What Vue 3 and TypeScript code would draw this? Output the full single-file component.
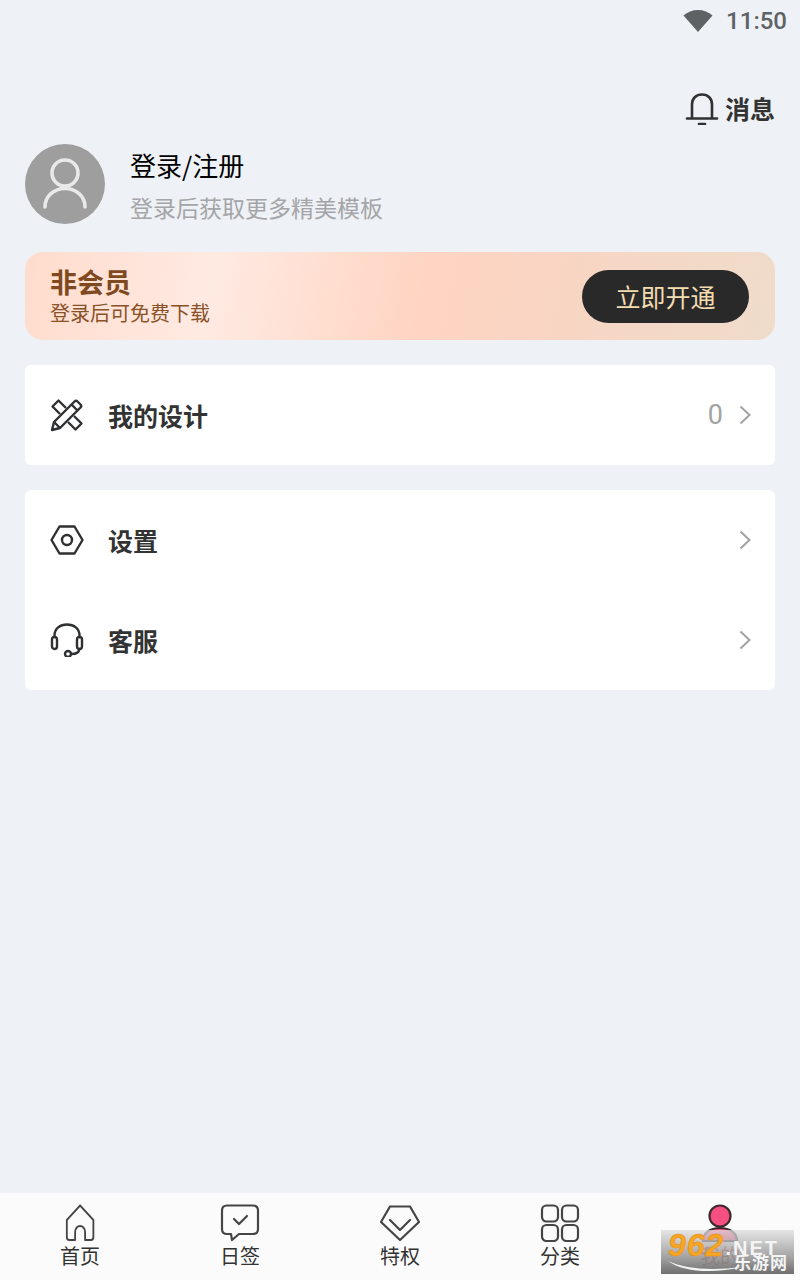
<script setup lang="ts">
const tabs = [
  { label: '首页', icon: 'home' },
  { label: '日签', icon: 'sign' },
  { label: '特权', icon: 'gem' },
  { label: '分类', icon: 'grid' },
  { label: '我的', icon: 'me' },
]
</script>

<template>
  <div class="page">
    <div class="status">
      <svg class="wifi" width="30" height="24" viewBox="0 0 30 24">
        <path d="M0.5 6.5C4.500 3 9.500 1 15 1s10.500 2 14.500 5.500L15 23z" fill="#5f6265" />
      </svg>
      <span class="time">11:50</span>
    </div>

    <div class="msg-row">
      <svg width="34" height="34" viewBox="0 0 34 34" fill="none" stroke="#2f3133" stroke-width="2.600">
        <path d="M7 27V13.500C7 7.500 11 3.500 17 3.500s10 4 10 10V27" />
        <path d="M2 27.500H32" stroke-linecap="round" />
        <path d="M14 33H20" stroke-linecap="round" />
      </svg>
      <span class="msg-text">消息</span>
    </div>

    <div class="user">
      <div class="avatar">
        <svg width="48" height="52" viewBox="0 0 48 52" fill="none" stroke="#e9e9e9" stroke-width="3.600" stroke-linecap="round">
          <circle cx="24" cy="15" r="13" />
          <path d="M4 49C4 38 13 30.500 24 30.500S44 38 44 49" />
        </svg>
      </div>
      <div class="user-text">
        <div class="user-title">登录/注册</div>
        <div class="user-sub">登录后获取更多精美模板</div>
      </div>
    </div>

    <div class="vip">
      <div class="vip-text">
        <div class="vip-title">非会员</div>
        <div class="vip-sub">登录后可免费下载</div>
      </div>
      <div class="vip-btn">立即开通</div>
    </div>

    <div class="card">
      <div class="row">
        <svg class="row-icon" width="34" height="34" viewBox="0 0 34 34" fill="none" stroke="#2e3032" stroke-width="2.400" stroke-linejoin="round">
          <path d="M10 16L2.500 8.500 8.500 2.500 16 10" />
          <path d="M18 24L25.500 31.500 31.500 25.500 24 18" />
          <path d="M2 32L4 24 24.500 3.500Q26 2 27.500 3.500L30.500 6.500Q32 8 30.500 9.500L10 30z" />
          <path d="M21.500 6.500L27.500 12.500" />
          <path d="M4 24L10 30" />
        </svg>
        <span class="row-label">我的设计</span>
        <span class="row-count">0</span>
        <svg class="chev" width="12" height="20" viewBox="0 0 12 20" fill="none" stroke="#a3a3a3" stroke-width="2">
          <path d="M1.500 1.500L10.500 10 1.500 18.500" />
        </svg>
      </div>
    </div>

    <div class="card">
      <div class="row">
        <svg class="row-icon" width="34" height="30" viewBox="0 0 34 30" fill="none" stroke="#2e3032" stroke-width="2.400" stroke-linejoin="round">
          <path d="M9.500 1.500H24.500L32.500 15 24.500 28.500H9.500L1.500 15z" />
          <circle cx="17" cy="15" r="5" />
        </svg>
        <span class="row-label">设置</span>
        <svg class="chev" width="12" height="20" viewBox="0 0 12 20" fill="none" stroke="#a3a3a3" stroke-width="2">
          <path d="M1.500 1.500L10.500 10 1.500 18.500" />
        </svg>
      </div>
      <div class="row">
        <svg class="row-icon" width="34" height="34" viewBox="0 0 34 34" fill="none" stroke="#2e3032" stroke-width="2.400" stroke-linecap="round">
          <path d="M4.500 14V12.500C4.500 5.500 10 1.500 17 1.500S29.500 5.500 29.500 12.500V14" />
          <rect x="2" y="14" width="5" height="12" rx="2.500" />
          <rect x="27" y="14" width="5" height="12" rx="2.500" />
          <path d="M29.500 26C29 29.500 26.500 31 21.500 31" />
          <circle cx="18" cy="31" r="3" />
        </svg>
        <span class="row-label">客服</span>
        <svg class="chev" width="12" height="20" viewBox="0 0 12 20" fill="none" stroke="#a3a3a3" stroke-width="2">
          <path d="M1.500 1.500L10.500 10 1.500 18.500" />
        </svg>
      </div>
    </div>

    <div class="tabbar">
      <div v-for="tab in tabs" :key="tab.label" class="tab" :class="{ 'tab--on': tab.icon === 'me' }">
        <svg width="40" height="38" viewBox="0 0 40 38" fill="none" stroke="#454545" stroke-width="2.200" stroke-linejoin="round" stroke-linecap="round">
          <template v-if="tab.icon === 'home'">
            <path d="M4 16L20 1.500 36 16 M4 16V33Q4 36 7 36H14V28A6 6 0 0 1 26 28V36H33Q36 36 36 33V16" transform="translate(3.500 0) scale(0.83 1)" />
          </template>
          <template v-else-if="tab.icon === 'sign'">
            <path d="M7 1.500H33Q38 1.500 38 6.500V25Q38 30 33 30H19L12 36 11 30H7Q2 30 2 25V6.500Q2 1.500 7 1.500z" />
            <path d="M14 15L19 20 27 12" />
          </template>
          <template v-else-if="tab.icon === 'gem'">
            <path d="M10 2.500H30L39 18 20 36 1 18z" />
            <path d="M10 16L20 26 30 16" />
          </template>
          <template v-else-if="tab.icon === 'grid'">
            <rect x="2" y="1.500" width="16" height="16" rx="4.500" />
            <rect x="22" y="1.500" width="16" height="16" rx="4.500" />
            <rect x="2" y="21" width="16" height="16" rx="4.500" />
            <rect x="22" y="21" width="16" height="16" rx="4.500" />
          </template>
          <template v-else>
            <circle cx="20" cy="12" r="10.500" fill="#f5507f" stroke="#3c2a30" />
            <path d="M3 37C3 29 10 24 20 24S37 29 37 37z" fill="#f5507f" stroke="#3c2a30" />
          </template>
        </svg>
        <span class="tab-label">{{ tab.label }}</span>
      </div>

      <div class="mark">
        <div class="mark-top">
          <span class="mark-num">962</span>
          <span class="mark-net">.NET</span>
        </div>
        <div class="mark-cn">乐游网</div>
        <svg class="mark-swoosh" width="76" height="12" viewBox="0 0 76 12">
          <path d="M1 1C18 9 44 11 75 7 46 14 16 12 1 1z" fill="#f4f4f4" />
        </svg>
      </div>
    </div>
  </div>
</template>

<style>
html,
body {
  margin: 0;
  background: #eef1f5;
}
</style>

<style scoped>
.page {
  width: 800px;
  height: 1280px;
  display: flex;
  flex-direction: column;
  background: #eef1f5;
  font-family: 'Noto Sans CJK SC', 'Noto Sans', sans-serif;
  overflow: hidden;
}

.status {
  height: 42px;
  display: flex;
  align-items: center;
  justify-content: flex-end;
  gap: 13px;
  padding-right: 13px;
  flex-shrink: 0;
}

.time {
  font-family: Roboto, sans-serif;
  font-size: 24px;
  font-weight: 500;
  color: #5f6265;
}

.msg-row {
  height: 60px;
  margin-top: 42px;
  margin-top: 36px;
  display: flex;
  align-items: center;
  justify-content: flex-end;
  gap: 6px;
  padding-right: 25px;
}

.msg-text {
  font-size: 25px;
  font-weight: 700;
  color: #333;
}

.user {
  display: flex;
  align-items: center;
  gap: 25px;
  margin: 6px 25px 0;
}

.avatar {
  width: 80px;
  height: 80px;
  border-radius: 50%;
  background: #9e9e9e;
  display: flex;
  align-items: center;
  justify-content: center;
}

.user-title {
  font-size: 26px;
  line-height: 40px;
  color: #000;
}

.user-sub {
  font-size: 23px;
  line-height: 34px;
  margin-top: 5px;
  color: #a3a5a8;
}

.vip {
  height: 88px;
  margin: 28px 25px 0;
  padding: 0 26px 0 25px;
  border-radius: 18px;
  display: flex;
  align-items: center;
  justify-content: space-between;
  background: linear-gradient(100deg, #ffdccd 0%, #ffeae2 25%, #ffd4c2 53%, #f8d5c3 72%, #efdccb 100%);
}

.vip-title {
  font-size: 27px;
  line-height: 34px;
  font-weight: 700;
  color: #7f4a1f;
}

.vip-sub {
  font-size: 20px;
  line-height: 28px;
  color: #8a5229;
}

.vip-btn {
  width: 167px;
  height: 53px;
  border-radius: 27px;
  background: #292929;
  color: #f3dcb0;
  font-size: 25px;
  display: flex;
  align-items: center;
  justify-content: center;
}

.card {
  margin: 25px 25px 0;
  background: #fff;
  border-radius: 6px;
}

.row {
  height: 100px;
  display: flex;
  align-items: center;
  padding: 0 24px 0 25px;
}

.row-icon {
  width: 34px;
  flex-shrink: 0;
}

.row-label {
  margin-left: 24px;
  font-size: 25px;
  font-weight: 700;
  color: #333;
  flex: 1;
}

.row-count {
  font-family: Roboto, sans-serif;
  font-size: 27px;
  color: #a3a3a3;
  margin-right: 16px;
}

.tabbar {
  position: relative;
  margin-top: auto;
  height: 87px;
  display: grid;
  grid-template-columns: repeat(5, 1fr);
  background: #fbfbfb;
}

.tab {
  display: flex;
  flex-direction: column;
  align-items: center;
  padding-top: 11px;
}

.tab-label {
  font-size: 20px;
  line-height: 28px;
  color: #333;
  margin-top: 0;
}

.tab--on .tab-label {
  color: #c43a3a;
}

.mark {
  position: absolute;
  left: 661px;
  top: 37px;
  width: 133px;
  height: 44px;
  background: linear-gradient(180deg, rgba(222, 222, 222, 0.75) 0%, rgba(150, 150, 150, 0.85) 60%, #6f6f6f 100%);
  overflow: hidden;
}

.mark-top {
  display: flex;
  align-items: flex-end;
  height: 28px;
  padding-left: 7px;
  font-family: 'Liberation Sans', sans-serif;
  font-weight: 700;
  font-style: italic;
}

.mark-num {
  font-size: 32px;
  line-height: 26px;
  letter-spacing: 1px;
  color: #f5a623;
  -webkit-text-stroke: 0.5px #e8891a;
}

.mark-net {
  font-size: 20px;
  line-height: 20px;
  font-style: normal;
  letter-spacing: 2px;
  color: #f4f4f4;
  margin-left: 1px;
}

.mark-cn {
  position: absolute;
  right: 6px;
  bottom: 1px;
  font-size: 17px;
  line-height: 22px;
  font-weight: 700;
  letter-spacing: 1px;
  color: #f4f4f4;
}

.mark-swoosh {
  position: absolute;
  left: 6px;
  top: 30px;
}
</style>
